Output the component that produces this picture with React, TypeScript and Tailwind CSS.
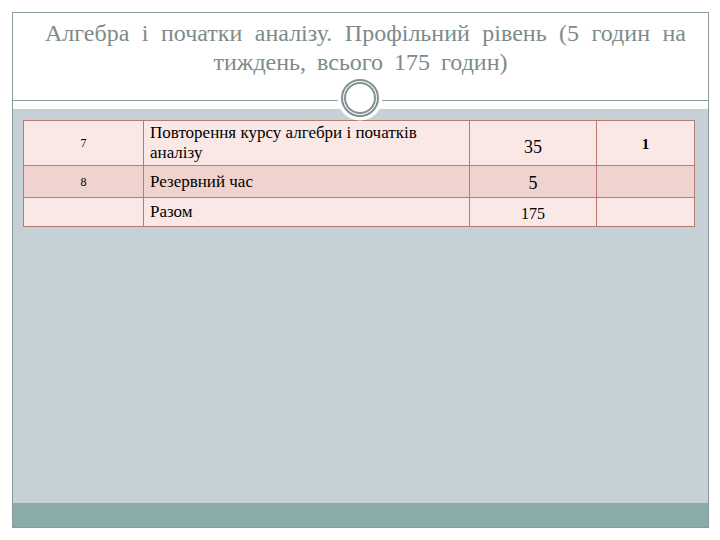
import React from "react";

const cell = "border border-[#b97a6f] align-middle";

export default function App() {
  return (
    <div className="w-[720px] h-[540px] bg-white pt-[12px] pl-[12px] [font-family:'Liberation_Serif','DejaVu_Serif',serif]">
      <div className="relative w-[697px] h-[516px] border border-[#8a9999] flex flex-col">
        <div className="h-[87px] flex flex-col pt-[6px] text-[#7d8b8b] text-[24px] leading-[29px]">
          <div className="ml-[32px] w-[641px] whitespace-nowrap text-justify [text-align-last:justify]">
            Алгебра і початки аналізу. Профільний рівень (5 годин на
          </div>
          <div className="text-center [word-spacing:5px]">тиждень, всього 175 годин)</div>
        </div>
        <div className="h-px bg-[#8a9999]" />
        <div className="h-[8px]" />
        <div className="flex-1 bg-[#c5d1d6] pl-[10px] pt-[11px]">
          <table className="w-[671px] table-fixed border-collapse text-black">
            <colgroup>
              <col className="w-[120px]" />
              <col className="w-[326px]" />
              <col className="w-[127px]" />
              <col className="w-[98px]" />
            </colgroup>
            <tbody>
              <tr className="bg-[#fae8e6] h-[45px]">
                <td className={`${cell} text-center text-[12px]`}>7</td>
                <td className={`${cell} pl-[6px] text-[17px] leading-[20px]`}>
                  Повторення курсу алгебри і початків
                  <br />
                  аналізу
                </td>
                <td className={`${cell} text-center text-[18px] pt-[8px]`}>35</td>
                <td className={`${cell} text-center text-[15px] font-bold pt-[3px]`}>1</td>
              </tr>
              <tr className="bg-[#f0d3ce] h-[30px]">
                <td className={`${cell} text-center text-[12px]`}>8</td>
                <td className={`${cell} pl-[6px] text-[17px] leading-[20px]`}>Резервний час</td>
                <td className={`${cell} text-center text-[18px] pt-[4px]`}>5</td>
                <td className={cell}></td>
              </tr>
              <tr className="bg-[#fae8e6] h-[29px]">
                <td className={cell}></td>
                <td className={`${cell} pl-[6px] text-[17px] leading-[20px]`}>Разом</td>
                <td className={`${cell} text-center text-[16px] pt-[4px]`}>175</td>
                <td className={cell}></td>
              </tr>
            </tbody>
          </table>
        </div>
        <div className="h-[24px] bg-[#8aabaa]" />
        <svg className="absolute left-[324px] top-[62px]" width="46" height="46" viewBox="0 0 46 46">
          <circle cx="23" cy="23" r="22.5" fill="#ffffff" />
          <circle cx="23" cy="23" r="18" fill="none" stroke="#7f9191" strokeWidth="2" />
          <circle cx="23" cy="23" r="15" fill="none" stroke="#7f9191" strokeWidth="2" />
          <circle cx="23" cy="23" r="16.5" fill="none" stroke="#d8e0e0" strokeWidth="1" strokeDasharray="1 1.5" />
        </svg>
      </div>
    </div>
  );
}
